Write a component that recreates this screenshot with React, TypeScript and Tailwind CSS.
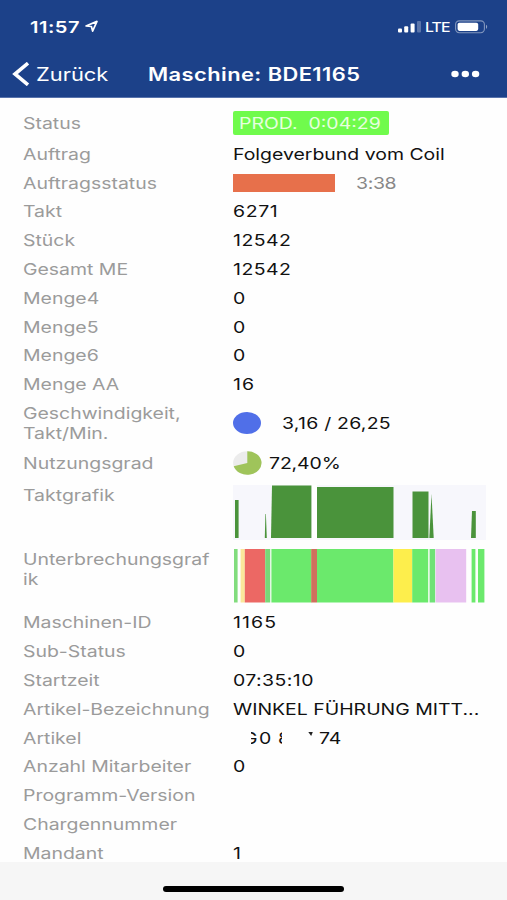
import type { ReactNode } from 'react';

type RowProps = {
  label: ReactNode;
  children?: ReactNode;
  className?: string;
};

function Wide({ children, className = '' }: { children: ReactNode; className?: string }) {
  return (
    <span className={`inline-block origin-left scale-x-[1.215] whitespace-nowrap ${className}`}>
      {children}
    </span>
  );
}

function Row({ label, children, className = 'h-[28.8px] items-center' }: RowProps) {
  return (
    <div className={`flex pl-[22.6px] ${className}`}>
      <div className="w-[210.4px] shrink-0 text-[#9b9b9b]">
        <Wide>{label}</Wide>
      </div>
      <div className="flex items-center">{children}</div>
    </div>
  );
}

function StatusBar() {
  return (
    <div className="flex h-[52px] items-center justify-between pl-[30px] pr-[19px] pt-px">
      <div className="flex items-center">
        <span className="w-[54px] text-[16.5px] font-semibold">
          <Wide className="tracking-[0.4px]">11:57</Wide>
        </span>
        <svg width="15" height="13" viewBox="0 0 15 13" fill="none" stroke="currentColor" strokeWidth="1.7" strokeLinejoin="round">
          <path d="M13 1.4 2 6l5.4.5 1.2 4.6z" />
        </svg>
      </div>
      <div className="flex items-center">
        <svg width="24" height="12" viewBox="0 0 24 12" fill="currentColor">
          <rect x="0" y="7.4" width="4" height="4.2" rx="1" />
          <rect x="6.2" y="5.2" width="4" height="6.4" rx="1" />
          <rect x="12.6" y="2.6" width="4" height="9" rx="1" />
          <rect x="19" y="0" width="4" height="11.6" rx="1" opacity="0.28" />
        </svg>
        <span className="ml-[3px] w-[30px] text-[13px] font-medium">
          <Wide className="-tracking-[0.7px]">LTE</Wide>
        </span>
        <svg width="33" height="14" viewBox="0 0 33 14" fill="none">
          <rect x="0.6" y="0.9" width="28.8" height="11.8" rx="3.6" stroke="currentColor" strokeOpacity="0.45" strokeWidth="1.1" />
          <rect x="2.6" y="2.7" width="20.6" height="8.2" rx="1.8" fill="currentColor" />
          <path d="M31 4.7c1.6.6 1.6 3.6 0 4.2z" fill="currentColor" fillOpacity="0.5" />
        </svg>
      </div>
    </div>
  );
}

function NavBar() {
  return (
    <div className="flex h-[44px] items-center pl-[12px]">
      <svg width="18" height="24" viewBox="0 0 18 24" fill="none" stroke="currentColor" strokeWidth="3.6">
        <path d="M16 1.2 3 12l13 10.8" />
      </svg>
      <span className="ml-[6px] w-[112px] pt-px text-[18px]">
        <Wide>Zurück</Wide>
      </span>
      <span className="w-[303px] pt-px text-[18px] font-semibold">
        <Wide className="tracking-[0.35px]">Maschine: BDE1165</Wide>
      </span>
      <svg width="29" height="8" viewBox="0 0 29 8" fill="currentColor">
        <ellipse cx="4" cy="4" rx="3.7" ry="3.2" />
        <ellipse cx="14.3" cy="4" rx="3.7" ry="3.2" />
        <ellipse cx="24.6" cy="4" rx="3.7" ry="3.2" />
      </svg>
    </div>
  );
}

function CycleChart() {
  return (
    <svg width="253" height="55" viewBox="0 0 253 55">
      <rect width="253" height="55" fill="#f7f7fc" />
      <g fill="#4a933b">
        <path d="M2 15h3.6v38H2z" />
        <path d="M31.8 53 32.4 29h.5l.9 24z" />
        <path d="M38 53 39 .5h39.5V53z" />
        <path d="M84 2h76.5v51H84z" />
        <path d="M179.5 6.5h16V53h-16z" />
        <path d="M196.3 53l2.2-44 2.2 44z" />
        <path d="M238 53l1-27h3.8v27z" />
      </g>
      <path d="M78.8 0H84v55h-5.2z" fill="#fff" />
    </svg>
  );
}

const segments = [
  { x: 1, w: 3.6, fill: '#81dc7d' },
  { x: 7.6, w: 4.2, fill: '#fbe79a' },
  { x: 11.8, w: 20.4, fill: '#ec6864' },
  { x: 32.2, w: 5, fill: '#78d878' },
  { x: 38.4, w: 40, fill: '#6be96c' },
  { x: 78.2, w: 5.8, fill: '#cf6f5d' },
  { x: 84, w: 76.4, fill: '#6be96c' },
  { x: 160.4, w: 18.8, fill: '#fdee4c' },
  { x: 179.2, w: 16, fill: '#6be96c' },
  { x: 196.6, w: 5.6, fill: '#6fe277' },
  { x: 202.6, w: 30.6, fill: '#e8c1f0' },
  { x: 238.6, w: 3.8, fill: '#6be96c' },
  { x: 245, w: 6.4, fill: '#6be96c' },
];

function InterruptionChart() {
  return (
    <svg width="253" height="54" viewBox="0 0 253 54">
      {segments.map((s) => (
        <rect key={s.x} x={s.x} y="0" width={s.w} height="53.5" fill={s.fill} />
      ))}
    </svg>
  );
}

export default function App() {
  return (
    <div className="flex h-[900px] w-[507px] flex-col overflow-hidden bg-[#fefefe] font-['Inter',sans-serif] text-[16px] leading-[20px] text-[#111]">
      <header className="h-[98px] shrink-0 border-b border-[#5873ac] bg-[#1c4189] text-white">
        <StatusBar />
        <NavBar />
      </header>

      <main className="h-[764px] shrink-0 overflow-hidden pt-[9px]">
        <Row label="Status" className="h-[32.5px] items-center">
          <div className="h-[24px] w-[156px] rounded-[2px] bg-[#70fb4c] pl-[6px] leading-[24px] text-[#e6ffdf]">
            <Wide className="whitespace-pre">{'PROD.  0:04:29'}</Wide>
          </div>
        </Row>
        <Row label="Auftrag"><Wide>Folgeverbund vom Coil</Wide></Row>
        <Row label="Auftragsstatus">
          <div className="mr-[21px] h-[18px] w-[102px] bg-[#e7704b]" />
          <Wide className="-tracking-[0.3px] text-[#888]">3:38</Wide>
        </Row>
        <Row label="Takt"><Wide className="tracking-[0.5px]">6271</Wide></Row>
        <Row label="Stück"><Wide className="tracking-[0.4px]">12542</Wide></Row>
        <Row label="Gesamt ME"><Wide className="tracking-[0.4px]">12542</Wide></Row>
        <Row label="Menge4"><Wide>0</Wide></Row>
        <Row label="Menge5"><Wide>0</Wide></Row>
        <Row label="Menge6"><Wide>0</Wide></Row>
        <Row label="Menge AA"><Wide className="tracking-[1px]">16</Wide></Row>
        <Row label={<>Geschwindigkeit,<br />Takt/Min.</>} className="h-[48.6px] items-center">
          <div className="mr-[21px] h-[22px] w-[28px] rounded-[50%] bg-[#506fe8]" />
          <Wide className="tracking-[0.2px]">3,16 / 26,25</Wide>
        </Row>
        <Row label="Nutzungsgrad" className="h-[32px] items-center">
          <svg className="mr-[7px]" width="29" height="24" viewBox="0 0 29 24">
            <ellipse cx="14.3" cy="12" rx="14.2" ry="11.7" fill="#ececec" />
            <path d="M14.3 12V.3a14.2 11.7 0 1 1-13.6 15z" fill="#9fc45a" />
          </svg>
          <Wide className="-tracking-[0.1px]">72,40%</Wide>
        </Row>
        <Row label={<span className="block -mt-px">Taktgrafik</span>} className="h-[64.8px] items-start pt-[5.4px]">
          <CycleChart />
        </Row>
        <Row label={<>Unterbrechungsgraf<br />ik</>} className="h-[64px] items-start pt-[5px]">
          <InterruptionChart />
        </Row>
        <Row label="Maschinen-ID"><Wide className="tracking-[0.9px]">1165</Wide></Row>
        <Row label="Sub-Status"><Wide>0</Wide></Row>
        <Row label="Startzeit"><Wide className="tracking-[0.35px]">07:35:10</Wide></Row>
        <Row label="Artikel-Bezeichnung"><Wide>WINKEL FÜHRUNG MITT...</Wide></Row>
        <Row label="Artikel">
          {/* parts of the article number are blanked out */}
          <div className="relative ml-[10px] w-[16px]">
            <Wide>G</Wide>
            <div className="absolute inset-y-0 left-0 w-[8px] bg-[#fefefe]" />
          </div>
          <div className="w-[18px]"><Wide>0</Wide></div>
          <div className="relative w-[14px] pl-px">
            <Wide>8</Wide>
            <div className="absolute inset-y-0 -right-[2px] w-[11px] bg-[#fefefe]" />
          </div>
          <svg className="mb-[2px] ml-[17px] mr-[6px]" width="5" height="12" viewBox="0 0 5 12">
            <path d="M.3 1H4.8L3.2 5z" fill="#222" />
          </svg>
          <Wide>74</Wide>
        </Row>
        <Row label="Anzahl Mitarbeiter"><Wide>0</Wide></Row>
        <Row label="Programm-Version" />
        <Row label="Chargennummer" />
        <Row label="Mandant"><Wide>1</Wide></Row>
      </main>

      <footer className="flex grow justify-center bg-[#f6f6f6] pt-[24px]">
        <div className="h-[6px] w-[181px] rounded-full bg-black" />
      </footer>
    </div>
  );
}
